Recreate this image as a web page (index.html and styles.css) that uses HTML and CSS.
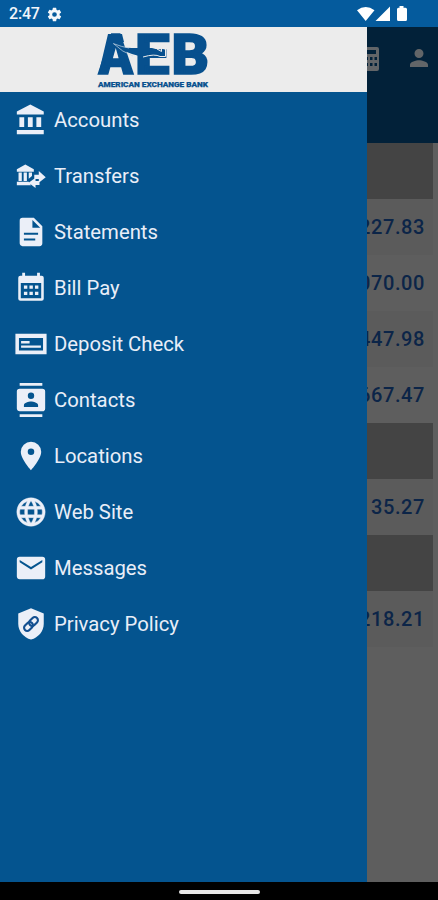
FILE: index.html
```html
<!DOCTYPE html>
<html lang="en">
<head>
<meta charset="utf-8">
<title>American Exchange Bank</title>
<link rel="stylesheet" href="styles.css">
</head>
<body>
<div class="phone">
  <header class="status">
    <span class="time">2:47</span>
    <svg class="gear" viewBox="0 0 24 24"><path fill-rule="evenodd" d="M19.140 12.940c.040-.300.060-.610.060-.940s-.020-.640-.070-.940l2.030-1.580a.490.490 0 0 0 .120-.610l-1.920-3.320a.490.490 0 0 0-.590-.220l-2.390.960a7 7 0 0 0-1.620-.940l-.360-2.540a.480.480 0 0 0-.480-.410h-3.840a.480.480 0 0 0-.470.410l-.360 2.540c-.590.240-1.130.570-1.620.940l-2.390-.960a.480.480 0 0 0-.590.220L2.740 8.870a.480.480 0 0 0 .120.610l2.030 1.580a6 6 0 0 0 0 1.880l-2.030 1.580a.490.490 0 0 0-.120.610l1.920 3.320c.120.220.370.290.590.220l2.390-.960c.500.380 1.030.700 1.620.940l.360 2.540c.050.240.240.410.480.410h3.840c.240 0 .440-.170.470-.410l.360-2.540a7 7 0 0 0 1.620-.940l2.390.960c.220.080.470 0 .590-.220l1.920-3.320a.480.480 0 0 0-.120-.610zM12 15.300a3.300 3.300 0 1 1 0-6.600 3.300 3.300 0 0 1 0 6.600z"/></svg>
    <svg class="signals" viewBox="0 0 52 16"><path d="M0 4.300Q8.700-2.500 17.500 4.300L8.700 15zM33 .500V15H18.500zM42.500 0h4v1.800h2q1.500 0 1.500 1.500v10.200q0 1.500-1.500 1.500h-7q-1.500 0-1.500-1.500V3.300q0-1.500 1.500-1.500h1z"/></svg>
  </header>
  <div class="main">
    <aside class="drawer">
      <div class="brand">
        <svg class="logo" viewBox="0 0 114 60">
          <g class="letters">
            <text x="2.500" y="46" textLength="34.500" lengthAdjust="spacingAndGlyphs">A</text>
            <text x="39" y="46" textLength="34.500" lengthAdjust="spacingAndGlyphs">E</text>
            <text x="75.500" y="46" textLength="37.500" lengthAdjust="spacingAndGlyphs">B</text>
          </g>
          <path class="wing" d="M12 6H26L28 14H16L6 42L3 44z"/>
          <path class="wing" d="M17 15Q26 20 36 20H56Q62 21 65 24V20L68 22V28Q66 29 64 27Q59 26 53 28Q44 29 36 26Q26 23 17 15z"/>
          <path class="edge" d="M18 16Q26 24 37 28M17 15.500Q26 19 33 20"/>
          <path class="cut" d="M47 29Q59 25.500 64 28.500H69.500V21L65.500 20V23.500L61 21"/>
          <text class="tagline" x="2" y="59" textLength="110" lengthAdjust="spacingAndGlyphs">AMERICAN EXCHANGE BANK</text>
        </svg>
      </div>
      <nav>
        <a><svg viewBox="0 0 24 24"><path d="M3.800 10v7h3.400v-7H3.800zm6 0v7h3.400v-7H9.800zM2 22h19v-3H2v3zm13.800-12v7h3.400v-7h-3.400zM11.500 1L2 6v2.200h19V6l-9.500-5z"/></svg>Accounts</a>
        <a><svg viewBox="0 0 24 24"><path d="M8 3.800L2 7.300V9h12V7.300zM3.200 9.500h2.300v6H3.200zm3.600 0h2.300v6H6.800zm3.600 0h2.300V12l-2.300 2zM2 16.100h8.300l1.700 2.400H2zM17.500 8.500l4.900 4.300-4.900 4v-2.600h-3.200v-3h3.200zM15.200 13.300v2.300H18v2.700h-2.800v2.200l-4.900-3.700z"/></svg>Transfers</a>
        <a><svg viewBox="0 0 24 24"><path d="M14 2H6a2 2 0 0 0-1.990 2L4 20c0 1.100.890 2 1.990 2H18a2 2 0 0 0 2-2V8l-6-6zm1 16H7v-1.500h8V18zm2-4H7v-1.500h10V14zm-4-5V3.500L18.500 9H13z"/></svg>Statements</a>
        <a><svg viewBox="0 0 24 24"><path fill-rule="evenodd" d="M5.800 1.300h2v2h8.500v-2h2v2h1.200q1.500 0 1.500 1.500v14.700q0 1.500-1.500 1.500h-15Q3 21 3 19.500V4.800q0-1.500 1.500-1.500h1.300zM4.800 8.500v10.700h14.400V8.500z"/><path d="M7 10.200h2.400v2.300H7zm3.900 0h2.400v2.300h-2.400zm3.900 0h2.400v2.300h-2.400zM7 14.600h2.400v2.300H7zm3.900 0h2.400v2.300h-2.400zm3.900 0h2.400v2.300h-2.400z"/></svg>Bill Pay</a>
        <a><svg viewBox="0 0 24 24"><path fill-rule="evenodd" d="M1 4.800h22v14.400H1zm2.500 2.900v8.800h17V7.700z"/><path d="M5 9.900h6v1.700H5zm0 3.200h14v1.600H5z"/></svg>Deposit Check</a>
        <a><svg viewBox="0 0 24 24"><path d="M20 0H4v2h16V0zM4 24h16v-2H4v2zM20 4H4a2 2 0 0 0-2 2v12c0 1.100.900 2 2 2h16a2 2 0 0 0 2-2V6a2 2 0 0 0-2-2zm-8 2.750a2.250 2.250 0 1 1 0 4.500 2.250 2.250 0 0 1 0-4.500zM17 17H7v-1.500c0-1.670 3.330-2.500 5-2.500s5 .830 5 2.500V17z"/></svg>Contacts</a>
        <a><svg viewBox="0 0 24 24"><path d="M12 2a7.200 7 0 0 0-7.200 7c0 5.250 7.200 13 7.200 13s7.200-7.750 7.200-13A7.200 7 0 0 0 12 2zm0 9.300a2.300 2.300 0 1 1 0-4.600 2.300 2.300 0 0 1 0 4.600z"/></svg>Locations</a>
        <a><svg class="globe" viewBox="0 0 24 24"><path d="M11.990 2C6.470 2 2 6.480 2 12s4.470 10 9.990 10C17.520 22 22 17.520 22 12S17.520 2 11.990 2zm6.930 6h-2.950a15.650 15.650 0 0 0-1.380-3.560A8.030 8.030 0 0 1 18.920 8zM12 4.040c.830 1.200 1.480 2.530 1.910 3.960h-3.820c.430-1.430 1.080-2.760 1.910-3.960zM4.260 14a8.200 8.200 0 0 1 0-4h3.380a16.500 16.500 0 0 0 0 4H4.260zm.820 2h2.950c.320 1.250.780 2.450 1.380 3.560A7.990 7.990 0 0 1 5.080 16zm2.950-8H5.080a7.990 7.990 0 0 1 4.330-3.560A15.650 15.650 0 0 0 8.030 8zM12 19.960A14.100 14.100 0 0 1 10.090 16h3.820A14.100 14.100 0 0 1 12 19.960zM14.340 14H9.660a14.700 14.700 0 0 1 0-4h4.680a14.700 14.700 0 0 1 0 4zm.250 5.560c.600-1.110 1.060-2.310 1.380-3.560h2.950a8.030 8.030 0 0 1-4.330 3.560zM16.360 14a16.500 16.500 0 0 0 0-4h3.380a8.200 8.200 0 0 1 0 4h-3.380z"/></svg>Web Site</a>
        <a><svg viewBox="0 0 24 24"><path d="M20 4H4a2 2 0 0 0-1.990 2L2 18c0 1.100.900 2 2 2h16a2 2 0 0 0 2-2V6a2 2 0 0 0-2-2zm0 4-8 5-8-5V6.300l8 5 8-5V8z"/></svg>Messages</a>
        <a><svg viewBox="0 0 24 24"><path d="M12 .800L3 4.500v7.300C3 17 6.700 21.500 12 23c5.300-1.500 9-6 9-11.200V4.500z"/><g class="link" transform="rotate(-45 12 12)"><rect x="6" y="9.800" width="7" height="4.400" rx="2.200"/><rect x="11" y="9.800" width="7" height="4.400" rx="2.200"/></g></svg>Privacy Policy</a>
      </nav>
    </aside>
    <section class="accounts">
      <div class="toolbar">
        <svg class="calc" viewBox="0 0 22 24"><path fill-rule="evenodd" d="M2 0h18q2 0 2 2v20q0 2-2 2H2q-2 0-2-2V2Q0 0 2 0zm1 3v4h16V3zm0 7v3h3v-3zm5 0v3h3v-3zm5 0v3h2.500v-3zm4.500 0v3H20v-3zM3 16v3h3v-3zm5 0v3h3v-3zm5 0v3h2.500v-3zm4.500 0v3H20v-3z"/></svg>
        <svg class="person" viewBox="4 4 16 16"><path d="M12 12a4 4 0 1 0 0-8 4 4 0 0 0 0 8zm0 2c-2.670 0-8 1.340-8 4v2h16v-2c0-2.660-5.330-4-8-4z"/></svg>
      </div>
      <div class="rows">
        <div class="group"></div>
        <div class="amount">227.83</div>
        <div class="amount plain">070.00</div>
        <div class="amount">447.98</div>
        <div class="amount plain">667.47</div>
        <div class="group"></div>
        <div class="amount">135.27</div>
        <div class="group"></div>
        <div class="amount">218.21</div>
      </div>
    </section>
  </div>
  <footer class="navbar"><div class="handle"></div></footer>
</div>
</body>
</html>
```
FILE: styles.css
```css
* { box-sizing: border-box; }
body { margin: 0; font-family: Roboto, sans-serif; }
.phone { width: 438px; height: 900px; display: flex; flex-direction: column; overflow: hidden; background: #000; }
.status { height: 27px; flex: none; display: flex; align-items: center; padding: 1px 29px 0 9px; background: #055b9d; color: #f2f6fb; }
.time { font-size: 16px; line-height: 20px; width: 31px; font-weight: 500; letter-spacing: -.2px; }
.gear { width: 17px; height: 17px; margin-left: 6px; fill: #f4f7fb; }
.signals { width: 52px; height: 16px; margin-left: auto; fill: #fff; }
.main { height: 855px; flex: none; display: flex; }
.drawer { width: 367px; flex: none; background: #04548f; }
.brand { height: 65px; background: #ececec; padding: 1px 0 0 96px; }
.logo { display: block; width: 114px; height: 60px; overflow: visible; }
.letters { font: 900 55px Roboto, sans-serif; fill: #07508e; stroke: #07508e; stroke-width: 1.6; }
.wing { fill: #07508e; }
.edge { fill: none; stroke: #c9d8e5; stroke-width: .7; }
.cut { fill: none; stroke: #ececec; stroke-width: 1; }
.tagline { font: 900 7.6px Roboto, sans-serif; fill: #07508e; stroke: #07508e; stroke-width: .25; }
nav a { height: 56px; display: flex; align-items: center; gap: 6px; padding-left: 14px; color: #e9eef8; font-size: 20.3px; }
nav svg { width: 34px; height: 34px; flex: none; fill: #ebeff8; }
.globe { stroke: #ebeff8; stroke-width: .3; }
.link { fill: none; stroke: #124f91; stroke-width: 1.5; }
.accounts { flex: 1; min-width: 0; background: #5e5e5e; overflow: hidden; }
.toolbar { height: 116px; background: #022139; display: flex; align-items: flex-start; justify-content: space-between; padding: 20px 10px 0 0; fill: #626568; }
.calc { width: 22px; height: 24px; margin-left: -10.5px; }
.person { width: 18px; height: 18px; margin-top: 2px; }
.rows { padding-right: 5px; }
.group { height: 56px; background: #444; }
.amount { height: 56px; background: #5b5b5b; display: flex; justify-content: flex-end; align-items: center; padding-right: 8px; color: #0c2548; font-size: 20px; font-weight: 500; letter-spacing: .6px; overflow: hidden; }
.plain { background: #5e5e5e; }
.navbar { flex: 1; display: flex; justify-content: center; padding-top: 8px; }
.handle { width: 81px; height: 4px; border-radius: 2px; background: #e8e8e8; }
```
